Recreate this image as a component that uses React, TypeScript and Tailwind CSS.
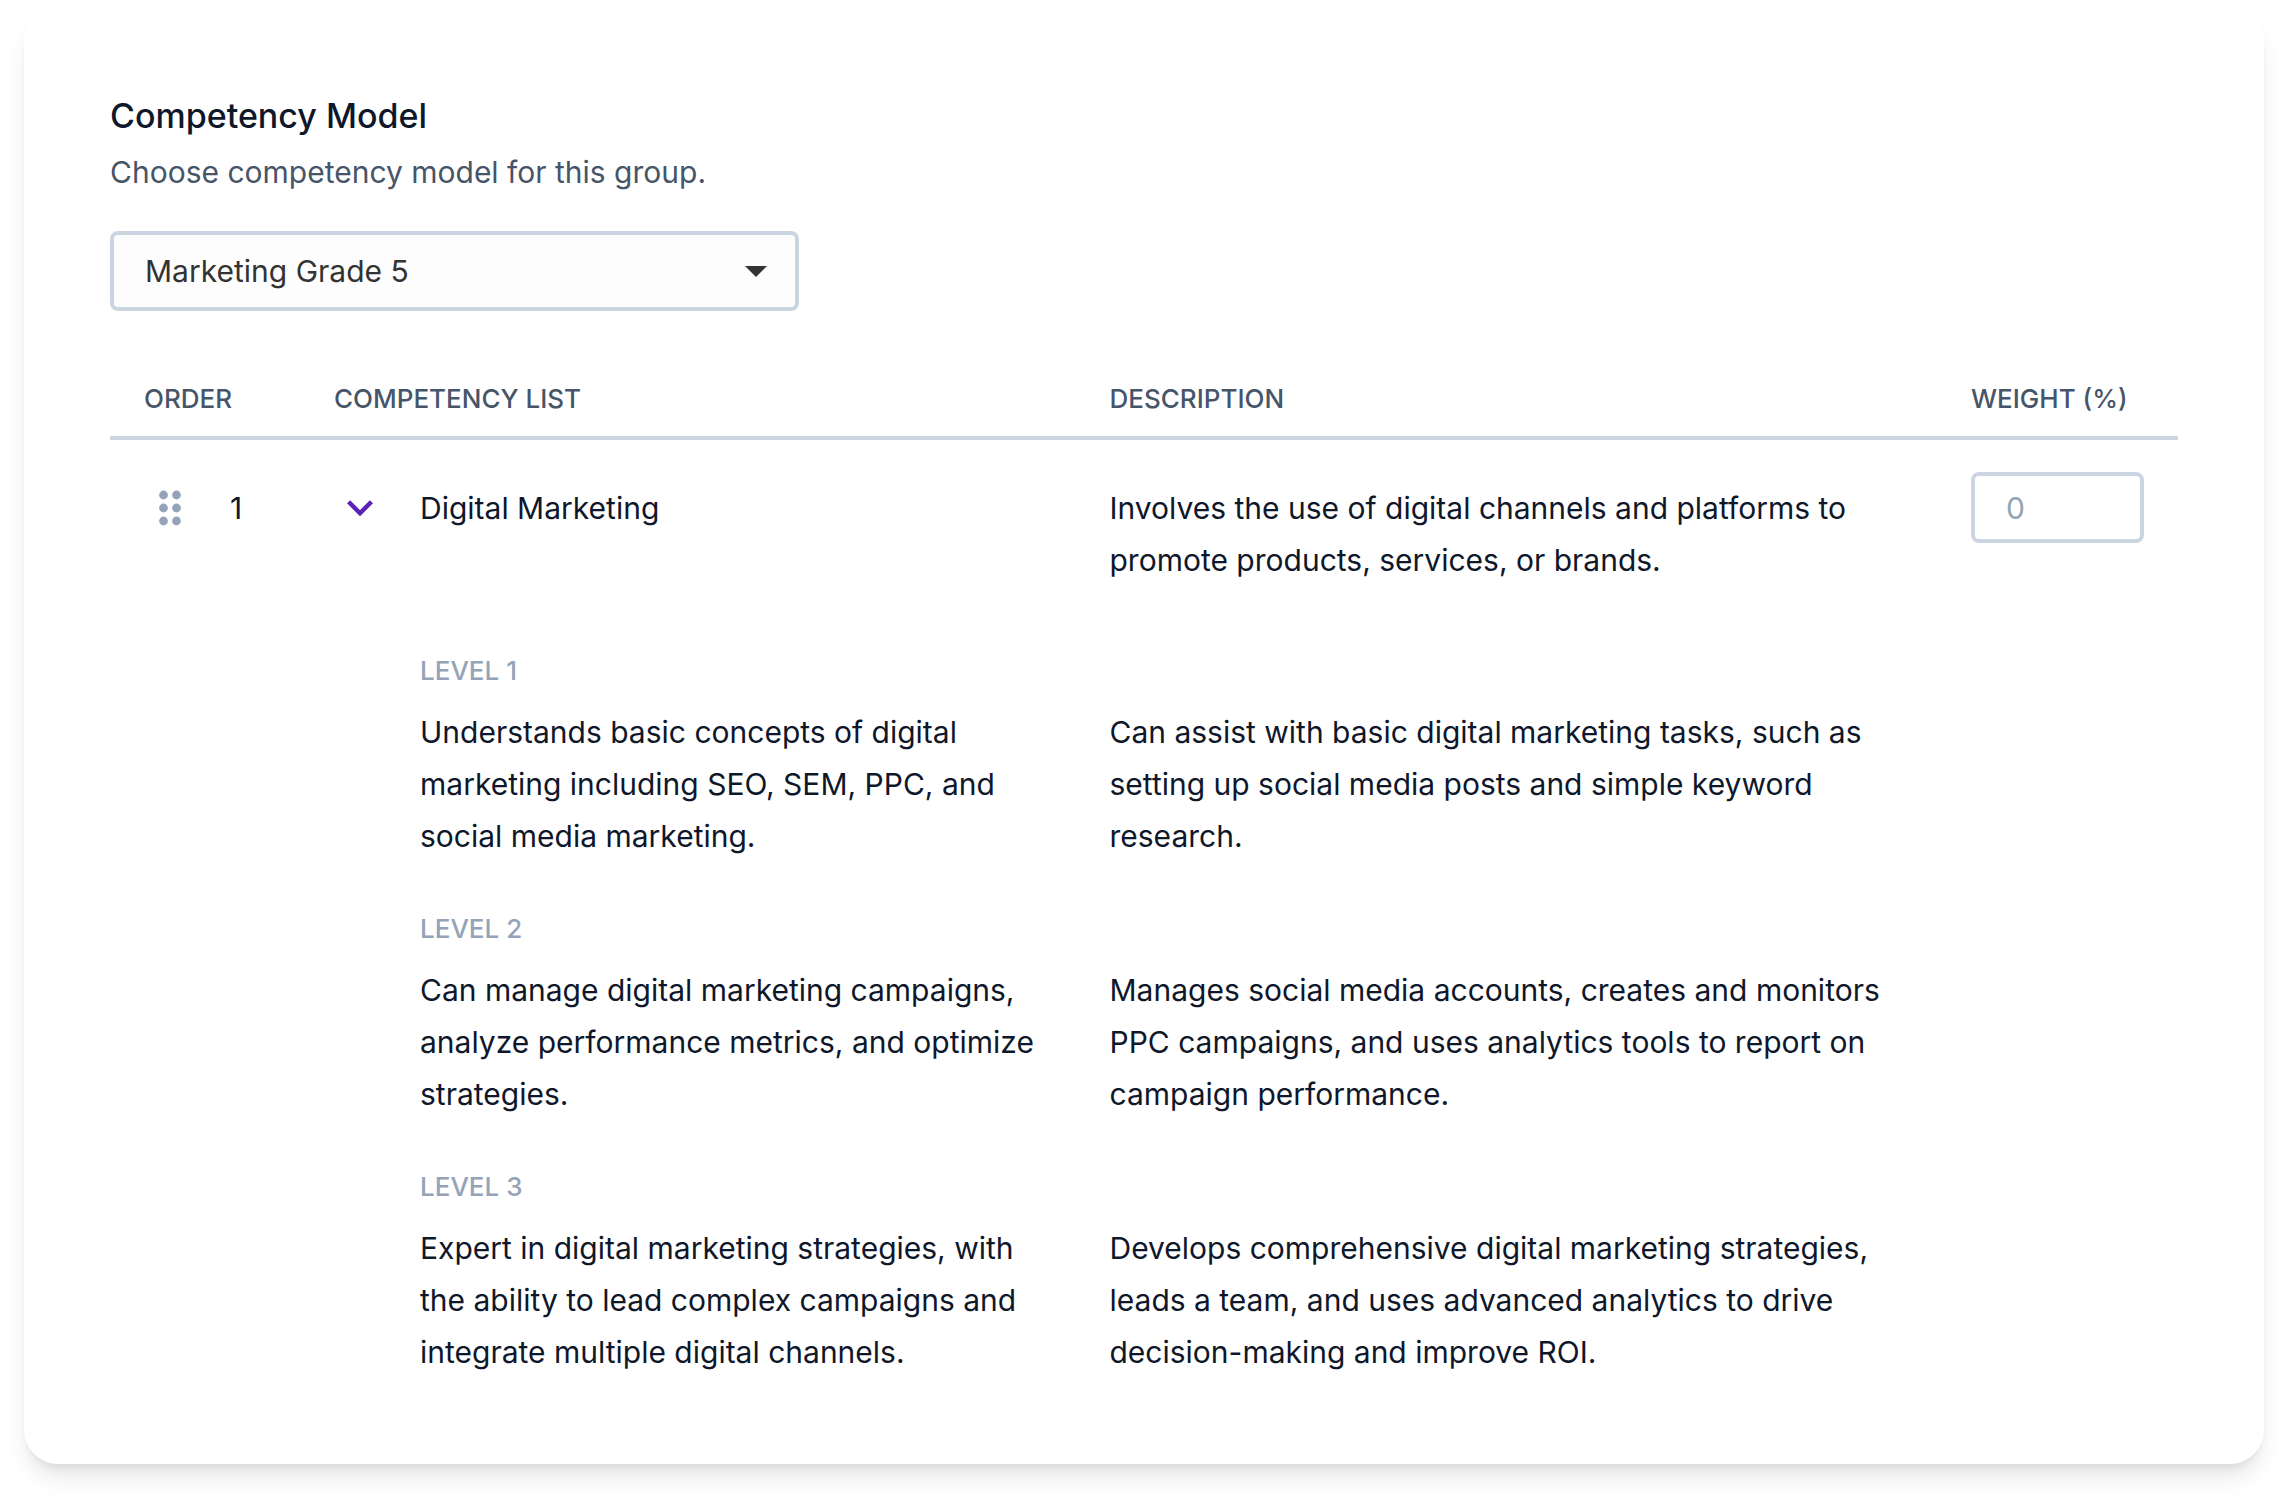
import { useState } from "react";

const competency = {
  order: 1,
  name: "Digital Marketing",
  description:
    "Involves the use of digital channels and platforms to promote products, services, or brands.",
  levels: [
    {
      label: "Level 1",
      summary:
        "Understands basic concepts of digital marketing including SEO, SEM, PPC, and social media marketing.",
      description:
        "Can assist with basic digital marketing tasks, such as setting up social media posts and simple keyword research.",
    },
    {
      label: "Level 2",
      summary:
        "Can manage digital marketing campaigns, analyze performance metrics, and optimize strategies.",
      description:
        "Manages social media accounts, creates and monitors PPC campaigns, and uses analytics tools to report on campaign performance.",
    },
    {
      label: "Level 3",
      summary:
        "Expert in digital marketing strategies, with the ability to lead complex campaigns and integrate multiple digital channels.",
      description:
        "Develops comprehensive digital marketing strategies, leads a team, and uses advanced analytics to drive decision-making and improve ROI.",
    },
  ],
};

const DragIcon = () => (
  <svg width="24" height="36" viewBox="0 0 24 36" fill="currentColor" aria-hidden="true">
    <circle cx="5.5" cy="5" r="4.4" />
    <circle cx="18.5" cy="5" r="4.4" />
    <circle cx="5.5" cy="18" r="4.4" />
    <circle cx="18.5" cy="18" r="4.4" />
    <circle cx="5.5" cy="31" r="4.4" />
    <circle cx="18.5" cy="31" r="4.4" />
  </svg>
);

const ChevronIcon = () => (
  <svg width="26" height="16" viewBox="0 0 26 16" fill="none" stroke="currentColor" strokeWidth="4.4" aria-hidden="true">
    <path d="M1.6 1.8 13 13.2 24.4 1.8" />
  </svg>
);

const CaretIcon = () => (
  <svg width="22" height="11" viewBox="0 0 22 11" fill="currentColor" aria-hidden="true">
    <path d="M0 0h22L11 11z" />
  </svg>
);

const ModelSelect = () => (
  <div className="relative mt-[33px] w-1/3 min-w-[360px]">
    <select
      id="model"
      aria-label="Competency model"
      className="block h-20 w-full appearance-none rounded-lg border-4 border-[#cbd5e1] bg-[#fdfdfd] px-[31px] text-[30px] text-[#333]"
    >
      <option>Marketing Grade 5</option>
    </select>
    <span className="pointer-events-none absolute inset-y-0 right-8 flex items-center text-[#333]">
      <CaretIcon />
    </span>
  </div>
);

export default function App() {
  const [open, setOpen] = useState(true);

  return (
    <div className="bg-white px-6 pt-2 pb-10 font-['Inter',sans-serif] text-[30px] leading-[52px] text-[#0f172a]">
      <section className="rounded-[34px] bg-white p-[86px] shadow-[0_17px_26px_-5px_rgba(0,0,0,0.1),0_7px_10px_-5px_rgba(15,23,42,0.1)]">
        <h1 className="text-[34px] leading-[44px] font-medium">Competency Model</h1>
        <p className="mt-2 text-[#475569]">Choose competency model for this group.</p>
        <ModelSelect />

        <table className="mt-[68px] w-full table-fixed text-left">
          <thead className="border-b-4 border-[#cbd5e1] text-[26px] leading-10 text-[#475569] uppercase">
            <tr>
              <th className="w-[190px] pb-[17px] pl-[34px] font-medium">Order</th>
              <th className="w-[37.5%] pb-[17px] pl-[34px] font-medium">Competency list</th>
              <th className="pb-[17px] pl-[34px] font-medium">Description</th>
              <th className="w-[241px] pb-[17px] pl-[34px] font-medium">Weight (%)</th>
            </tr>
          </thead>
          <tbody className="align-top">
            <tr>
              <td className="pt-[42px] pl-[34px]">
                <div className="flex items-center gap-[34px]">
                  <button type="button" aria-label="Reorder" className="flex h-[52px] w-[52px] cursor-grab items-center justify-center text-[#94a3b8]">
                    <DragIcon />
                  </button>
                  <span>{competency.order}</span>
                </div>
              </td>
              <td className="pt-[42px] pl-[34px]">
                <div className="flex items-center gap-[34px]">
                  <button
                    type="button"
                    aria-label="Toggle levels"
                    aria-expanded={open}
                    onClick={() => setOpen(!open)}
                    className="flex h-[52px] w-[52px] items-center justify-center text-[#5b21b6]"
                  >
                    <ChevronIcon />
                  </button>
                  <span>{competency.name}</span>
                </div>
              </td>
              <td className="pt-[42px] pr-[34px] pb-[18px] pl-[34px]">{competency.description}</td>
              <td className="pt-8 pr-[34px] pl-[34px]">
                <input
                  type="text"
                  inputMode="numeric"
                  placeholder="0"
                  aria-label="Weight (%)"
                  className="block h-[71px] w-full rounded-lg border-4 border-[#cbd5e1] px-[31px] placeholder:text-[#94a3b8]"
                />
              </td>
            </tr>
            {open &&
              competency.levels.map((level) => (
                <tr key={level.label}>
                  <td />
                  <td className="pt-[47px] pr-[34px] pl-[120px]">
                    <h2 className="mb-[15px] text-[26px] leading-10 font-medium text-[#94a3b8] uppercase">
                      {level.label}
                    </h2>
                    <p>{level.summary}</p>
                  </td>
                  <td className="pr-[34px] pl-[34px] align-bottom">{level.description}</td>
                  <td />
                </tr>
              ))}
          </tbody>
        </table>
      </section>
    </div>
  );
}
